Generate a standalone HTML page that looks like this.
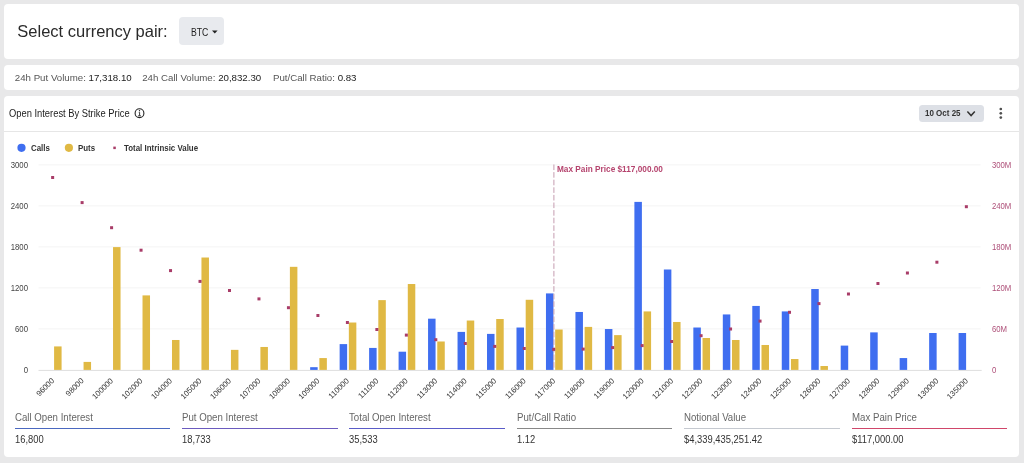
<!DOCTYPE html>
<html><head><meta charset="utf-8">
<style>
*{margin:0;padding:0;box-sizing:border-box}
html,body{width:1024px;height:463px;overflow:hidden;background:#e8e8e9;font-family:"Liberation Sans",sans-serif;color:#222}
.card{position:absolute;left:3.5px;width:1015px;background:#fff;border-radius:4px}
.t{position:absolute;white-space:nowrap;line-height:1}
svg text{font-family:"Liberation Sans",sans-serif}
.ax{font-size:7.8px;fill:#333}
.axl{font-size:8.2px;fill:#444}
.axr{font-size:8.2px;fill:#ae5079}
.mp{font-size:8.7px;font-weight:700;fill:#b5446e}
.stat{position:absolute;top:0;width:155.5px}
.stat .l{position:absolute;left:0;top:411.2px;font-size:10.5px;color:#666;transform:scaleX(0.92);transform-origin:0 0;white-space:nowrap}
.stat .u{position:absolute;left:0;top:428px;width:100%;height:1px}
.stat .v{position:absolute;left:0;top:432.6px;font-size:10.6px;color:#333;transform:scaleX(0.885);transform-origin:0 0;white-space:nowrap}
</style></head><body>
<div id="root" style="position:absolute;left:0;top:0;width:1024px;height:463px;overflow:hidden;will-change:transform">
<div class="card" style="top:3.5px;height:55.3px"></div>
<div class="card" style="top:65px;height:24.8px"></div>
<div class="card" style="top:95.5px;height:361.5px"></div>

<div class="t" style="left:17.3px;top:22.7px;font-size:16.5px;color:#2a2a2a">Select currency pair:</div>
<div style="position:absolute;left:179px;top:17.3px;width:45.3px;height:27.5px;background:#e8eaee;border-radius:4px"></div>
<div class="t" style="left:190.9px;top:27.6px;font-size:10.3px;color:#222;transform:scaleX(0.845);transform-origin:0 0">BTC</div>
<svg style="position:absolute;left:0;top:0" width="1024" height="60"><path d="M212 30.5 L217.6 30.5 L214.8 33.5 Z" fill="#222"/></svg>

<div class="t" style="left:14.8px;top:72.6px;font-size:9.7px;color:#555">24h Put Volume: <span style="color:#222">17,318.10</span></div>
<div class="t" style="left:142.2px;top:72.6px;font-size:9.7px;color:#555">24h Call Volume: <span style="color:#222">20,832.30</span></div>
<div class="t" style="left:273px;top:72.6px;font-size:9.7px;color:#555">Put/Call Ratio: <span style="color:#222">0.83</span></div>

<div class="t" style="left:9.3px;top:108.9px;font-size:10.2px;color:#222;transform:scaleX(0.918);transform-origin:0 0">Open Interest By Strike Price</div>
<svg style="position:absolute;left:0;top:95px" width="1024" height="40">
<circle cx="139.5" cy="18.2" r="4.4" fill="none" stroke="#222" stroke-width="1.1"/>
<circle cx="139.5" cy="15.7" r="0.65" fill="#222"/>
<path d="M138.8 17.4 H139.6 V20.6 M138.1 20.8 H140.9" stroke="#222" stroke-width="0.9" fill="none"/>
</svg>
<div style="position:absolute;left:918.7px;top:104.6px;width:65.1px;height:17.1px;background:#dde0e6;border-radius:3.5px"></div>
<div class="t" style="left:924.9px;top:108.6px;font-size:8.9px;font-weight:700;color:#333;transform:scaleX(0.9);transform-origin:0 0">10 Oct 25</div>
<svg style="position:absolute;left:0;top:95px" width="1024" height="40">
<path d="M967.4 16.6 L971.1 20.6 L974.8 16.6" fill="none" stroke="#333" stroke-width="1.5"/>
<circle cx="1000.8" cy="14" r="1.35" fill="#505050"/><circle cx="1000.8" cy="18.3" r="1.35" fill="#505050"/><circle cx="1000.8" cy="22.6" r="1.35" fill="#505050"/>
</svg>
<div style="position:absolute;left:3.5px;top:131px;width:1015px;height:1px;background:#e6e6e6"></div>

<svg style="position:absolute;left:0;top:0" width="1024" height="160">
<circle cx="21.5" cy="147.8" r="4.1" fill="#3f6ef0"/>
<circle cx="68.9" cy="147.8" r="4.1" fill="#e0b944"/>
<rect x="113.3" y="146.6" width="2.5" height="2.5" fill="#a83c68"/>
</svg>
<div class="t" style="left:30.9px;top:144px;font-size:8.7px;font-weight:700;color:#333;transform:scaleX(0.91);transform-origin:0 0">Calls</div>
<div class="t" style="left:78px;top:144px;font-size:8.7px;font-weight:700;color:#333;transform:scaleX(0.91);transform-origin:0 0">Puts</div>
<div class="t" style="left:124.3px;top:144px;font-size:8.7px;font-weight:700;color:#333;transform:scaleX(0.91);transform-origin:0 0">Total Intrinsic Value</div>

<svg style="position:absolute;left:0;top:0" width="1024" height="463">
<line x1="38.5" y1="328.90" x2="980.6" y2="328.90" stroke="#f4f4f4" stroke-width="1"/>
<line x1="38.5" y1="287.90" x2="980.6" y2="287.90" stroke="#f4f4f4" stroke-width="1"/>
<line x1="38.5" y1="246.90" x2="980.6" y2="246.90" stroke="#f4f4f4" stroke-width="1"/>
<line x1="38.5" y1="205.90" x2="980.6" y2="205.90" stroke="#f4f4f4" stroke-width="1"/>
<line x1="38.5" y1="164.90" x2="980.6" y2="164.90" stroke="#f4f4f4" stroke-width="1"/>
<line x1="38.5" y1="370.40" x2="981.7" y2="370.40" stroke="#dedede" stroke-width="1"/>
<text x="28" y="373.50" text-anchor="end" class="axl" transform="translate(28,0) scale(0.95,1) translate(-28,0)">0</text>
<text x="28" y="332.50" text-anchor="end" class="axl" transform="translate(28,0) scale(0.95,1) translate(-28,0)">600</text>
<text x="28" y="291.50" text-anchor="end" class="axl" transform="translate(28,0) scale(0.95,1) translate(-28,0)">1200</text>
<text x="28" y="250.50" text-anchor="end" class="axl" transform="translate(28,0) scale(0.95,1) translate(-28,0)">1800</text>
<text x="28" y="209.50" text-anchor="end" class="axl" transform="translate(28,0) scale(0.95,1) translate(-28,0)">2400</text>
<text x="28" y="168.50" text-anchor="end" class="axl" transform="translate(28,0) scale(0.95,1) translate(-28,0)">3000</text>
<text x="991.9" y="373.40" class="axr" transform="translate(991.9,0) scale(0.95,1) translate(-991.9,0)">0</text>
<text x="991.9" y="332.40" class="axr" transform="translate(991.9,0) scale(0.95,1) translate(-991.9,0)">60M</text>
<text x="991.9" y="291.40" class="axr" transform="translate(991.9,0) scale(0.95,1) translate(-991.9,0)">120M</text>
<text x="991.9" y="250.40" class="axr" transform="translate(991.9,0) scale(0.95,1) translate(-991.9,0)">180M</text>
<text x="991.9" y="209.40" class="axr" transform="translate(991.9,0) scale(0.95,1) translate(-991.9,0)">240M</text>
<text x="991.9" y="168.40" class="axr" transform="translate(991.9,0) scale(0.95,1) translate(-991.9,0)">300M</text>
<rect x="54.09" y="346.42" width="7.5" height="23.48" fill="#e0b944"/>
<rect x="83.56" y="361.91" width="7.5" height="7.99" fill="#e0b944"/>
<rect x="113.04" y="247.10" width="7.5" height="122.80" fill="#e0b944"/>
<rect x="142.51" y="295.39" width="7.5" height="74.51" fill="#e0b944"/>
<rect x="171.99" y="339.99" width="7.5" height="29.91" fill="#e0b944"/>
<rect x="201.46" y="257.51" width="7.5" height="112.39" fill="#e0b944"/>
<rect x="230.94" y="349.85" width="7.5" height="20.05" fill="#e0b944"/>
<rect x="260.41" y="346.97" width="7.5" height="22.93" fill="#e0b944"/>
<rect x="289.89" y="266.83" width="7.5" height="103.07" fill="#e0b944"/>
<rect x="310.16" y="367.18" width="7.5" height="2.72" fill="#3f6ef0"/>
<rect x="319.36" y="358.07" width="7.5" height="11.83" fill="#e0b944"/>
<rect x="339.64" y="344.10" width="7.5" height="25.80" fill="#3f6ef0"/>
<rect x="348.84" y="322.52" width="7.5" height="47.38" fill="#e0b944"/>
<rect x="369.11" y="347.93" width="7.5" height="21.97" fill="#3f6ef0"/>
<rect x="378.31" y="300.12" width="7.5" height="69.78" fill="#e0b944"/>
<rect x="398.59" y="351.70" width="7.5" height="18.20" fill="#3f6ef0"/>
<rect x="407.79" y="284.02" width="7.5" height="85.88" fill="#e0b944"/>
<rect x="428.06" y="318.68" width="7.5" height="51.22" fill="#3f6ef0"/>
<rect x="437.26" y="341.49" width="7.5" height="28.41" fill="#e0b944"/>
<rect x="457.54" y="331.90" width="7.5" height="38.00" fill="#3f6ef0"/>
<rect x="466.74" y="320.53" width="7.5" height="49.37" fill="#e0b944"/>
<rect x="487.01" y="333.89" width="7.5" height="36.01" fill="#3f6ef0"/>
<rect x="496.21" y="319.02" width="7.5" height="50.88" fill="#e0b944"/>
<rect x="516.49" y="327.52" width="7.5" height="42.38" fill="#3f6ef0"/>
<rect x="525.69" y="299.78" width="7.5" height="70.12" fill="#e0b944"/>
<rect x="545.96" y="293.41" width="7.5" height="76.49" fill="#3f6ef0"/>
<rect x="555.16" y="329.51" width="7.5" height="40.39" fill="#e0b944"/>
<rect x="575.44" y="311.97" width="7.5" height="57.93" fill="#3f6ef0"/>
<rect x="584.64" y="326.90" width="7.5" height="43.00" fill="#e0b944"/>
<rect x="604.91" y="329.03" width="7.5" height="40.87" fill="#3f6ef0"/>
<rect x="614.11" y="335.12" width="7.5" height="34.78" fill="#e0b944"/>
<rect x="634.39" y="201.89" width="7.5" height="168.01" fill="#3f6ef0"/>
<rect x="643.59" y="311.42" width="7.5" height="58.48" fill="#e0b944"/>
<rect x="663.86" y="269.50" width="7.5" height="100.40" fill="#3f6ef0"/>
<rect x="673.06" y="321.97" width="7.5" height="47.93" fill="#e0b944"/>
<rect x="693.34" y="327.52" width="7.5" height="42.38" fill="#3f6ef0"/>
<rect x="702.54" y="338.00" width="7.5" height="31.90" fill="#e0b944"/>
<rect x="722.81" y="314.44" width="7.5" height="55.46" fill="#3f6ef0"/>
<rect x="732.01" y="339.99" width="7.5" height="29.91" fill="#e0b944"/>
<rect x="752.29" y="305.94" width="7.5" height="63.96" fill="#3f6ef0"/>
<rect x="761.49" y="344.99" width="7.5" height="24.91" fill="#e0b944"/>
<rect x="781.76" y="311.42" width="7.5" height="58.48" fill="#3f6ef0"/>
<rect x="790.96" y="359.03" width="7.5" height="10.87" fill="#e0b944"/>
<rect x="811.24" y="289.02" width="7.5" height="80.88" fill="#3f6ef0"/>
<rect x="820.44" y="366.02" width="7.5" height="3.88" fill="#e0b944"/>
<rect x="840.71" y="345.60" width="7.5" height="24.30" fill="#3f6ef0"/>
<rect x="870.19" y="332.38" width="7.5" height="37.52" fill="#3f6ef0"/>
<rect x="899.66" y="358.07" width="7.5" height="11.83" fill="#3f6ef0"/>
<rect x="929.14" y="333.00" width="7.5" height="36.90" fill="#3f6ef0"/>
<rect x="958.61" y="333.00" width="7.5" height="36.90" fill="#3f6ef0"/>
<line x1="553.90" y1="164.5" x2="553.90" y2="369.90" stroke="#c59db0" stroke-width="1" stroke-dasharray="5.6 2"/>
<text x="557" y="172.3" class="mp" transform="translate(557,0) scale(0.95,1) translate(-557,0)">Max Pain Price $117,000.00</text>
<rect x="51.14" y="176.00" width="3" height="3" fill="#a83c68"/>
<rect x="80.61" y="201.10" width="3" height="3" fill="#a83c68"/>
<rect x="110.09" y="226.20" width="3" height="3" fill="#a83c68"/>
<rect x="139.56" y="248.70" width="3" height="3" fill="#a83c68"/>
<rect x="169.04" y="269.10" width="3" height="3" fill="#a83c68"/>
<rect x="198.51" y="279.90" width="3" height="3" fill="#a83c68"/>
<rect x="227.99" y="289.00" width="3" height="3" fill="#a83c68"/>
<rect x="257.46" y="297.40" width="3" height="3" fill="#a83c68"/>
<rect x="286.94" y="306.20" width="3" height="3" fill="#a83c68"/>
<rect x="316.41" y="314.00" width="3" height="3" fill="#a83c68"/>
<rect x="345.89" y="321.00" width="3" height="3" fill="#a83c68"/>
<rect x="375.36" y="328.00" width="3" height="3" fill="#a83c68"/>
<rect x="404.84" y="333.60" width="3" height="3" fill="#a83c68"/>
<rect x="434.31" y="338.20" width="3" height="3" fill="#a83c68"/>
<rect x="463.79" y="342.00" width="3" height="3" fill="#a83c68"/>
<rect x="493.26" y="344.90" width="3" height="3" fill="#a83c68"/>
<rect x="522.74" y="347.00" width="3" height="3" fill="#a83c68"/>
<rect x="552.21" y="347.90" width="3" height="3" fill="#a83c68"/>
<rect x="581.69" y="347.60" width="3" height="3" fill="#a83c68"/>
<rect x="611.16" y="346.10" width="3" height="3" fill="#a83c68"/>
<rect x="640.64" y="344.10" width="3" height="3" fill="#a83c68"/>
<rect x="670.11" y="340.00" width="3" height="3" fill="#a83c68"/>
<rect x="699.59" y="334.20" width="3" height="3" fill="#a83c68"/>
<rect x="729.06" y="327.50" width="3" height="3" fill="#a83c68"/>
<rect x="758.54" y="319.60" width="3" height="3" fill="#a83c68"/>
<rect x="788.01" y="310.80" width="3" height="3" fill="#a83c68"/>
<rect x="817.49" y="302.10" width="3" height="3" fill="#a83c68"/>
<rect x="846.96" y="292.50" width="3" height="3" fill="#a83c68"/>
<rect x="876.44" y="282.00" width="3" height="3" fill="#a83c68"/>
<rect x="905.91" y="271.50" width="3" height="3" fill="#a83c68"/>
<rect x="935.39" y="260.70" width="3" height="3" fill="#a83c68"/>
<rect x="964.86" y="205.20" width="3" height="3" fill="#a83c68"/>
<text transform="translate(54.74,381.3) rotate(-45)" text-anchor="end" class="ax">96000</text>
<text transform="translate(84.21,381.3) rotate(-45)" text-anchor="end" class="ax">98000</text>
<text transform="translate(113.69,381.3) rotate(-45)" text-anchor="end" class="ax">100000</text>
<text transform="translate(143.16,381.3) rotate(-45)" text-anchor="end" class="ax">102000</text>
<text transform="translate(172.64,381.3) rotate(-45)" text-anchor="end" class="ax">104000</text>
<text transform="translate(202.11,381.3) rotate(-45)" text-anchor="end" class="ax">105000</text>
<text transform="translate(231.59,381.3) rotate(-45)" text-anchor="end" class="ax">106000</text>
<text transform="translate(261.06,381.3) rotate(-45)" text-anchor="end" class="ax">107000</text>
<text transform="translate(290.54,381.3) rotate(-45)" text-anchor="end" class="ax">108000</text>
<text transform="translate(320.01,381.3) rotate(-45)" text-anchor="end" class="ax">109000</text>
<text transform="translate(349.49,381.3) rotate(-45)" text-anchor="end" class="ax">110000</text>
<text transform="translate(378.96,381.3) rotate(-45)" text-anchor="end" class="ax">111000</text>
<text transform="translate(408.44,381.3) rotate(-45)" text-anchor="end" class="ax">112000</text>
<text transform="translate(437.91,381.3) rotate(-45)" text-anchor="end" class="ax">113000</text>
<text transform="translate(467.39,381.3) rotate(-45)" text-anchor="end" class="ax">114000</text>
<text transform="translate(496.86,381.3) rotate(-45)" text-anchor="end" class="ax">115000</text>
<text transform="translate(526.34,381.3) rotate(-45)" text-anchor="end" class="ax">116000</text>
<text transform="translate(555.81,381.3) rotate(-45)" text-anchor="end" class="ax">117000</text>
<text transform="translate(585.29,381.3) rotate(-45)" text-anchor="end" class="ax">118000</text>
<text transform="translate(614.76,381.3) rotate(-45)" text-anchor="end" class="ax">119000</text>
<text transform="translate(644.24,381.3) rotate(-45)" text-anchor="end" class="ax">120000</text>
<text transform="translate(673.71,381.3) rotate(-45)" text-anchor="end" class="ax">121000</text>
<text transform="translate(703.19,381.3) rotate(-45)" text-anchor="end" class="ax">122000</text>
<text transform="translate(732.66,381.3) rotate(-45)" text-anchor="end" class="ax">123000</text>
<text transform="translate(762.14,381.3) rotate(-45)" text-anchor="end" class="ax">124000</text>
<text transform="translate(791.61,381.3) rotate(-45)" text-anchor="end" class="ax">125000</text>
<text transform="translate(821.09,381.3) rotate(-45)" text-anchor="end" class="ax">126000</text>
<text transform="translate(850.56,381.3) rotate(-45)" text-anchor="end" class="ax">127000</text>
<text transform="translate(880.04,381.3) rotate(-45)" text-anchor="end" class="ax">128000</text>
<text transform="translate(909.51,381.3) rotate(-45)" text-anchor="end" class="ax">129000</text>
<text transform="translate(938.99,381.3) rotate(-45)" text-anchor="end" class="ax">130000</text>
<text transform="translate(968.46,381.3) rotate(-45)" text-anchor="end" class="ax">135000</text>
</svg>

<div class="stat" style="left:14.6px"><div class="l">Call Open Interest</div><div class="u" style="background:#4a68c0"></div><div class="v">16,800</div></div>
<div class="stat" style="left:182px"><div class="l">Put Open Interest</div><div class="u" style="background:#6b5bbf"></div><div class="v">18,733</div></div>
<div class="stat" style="left:349.4px"><div class="l">Total Open Interest</div><div class="u" style="background:#5a5cc8"></div><div class="v">35,533</div></div>
<div class="stat" style="left:516.8px"><div class="l">Put/Call Ratio</div><div class="u" style="background:#888"></div><div class="v">1.12</div></div>
<div class="stat" style="left:684.2px"><div class="l">Notional Value</div><div class="u" style="background:#c5c9d0"></div><div class="v">$4,339,435,251.42</div></div>
<div class="stat" style="left:851.6px"><div class="l">Max Pain Price</div><div class="u" style="background:#d0466a"></div><div class="v">$117,000.00</div></div>
</div>
</body></html>
